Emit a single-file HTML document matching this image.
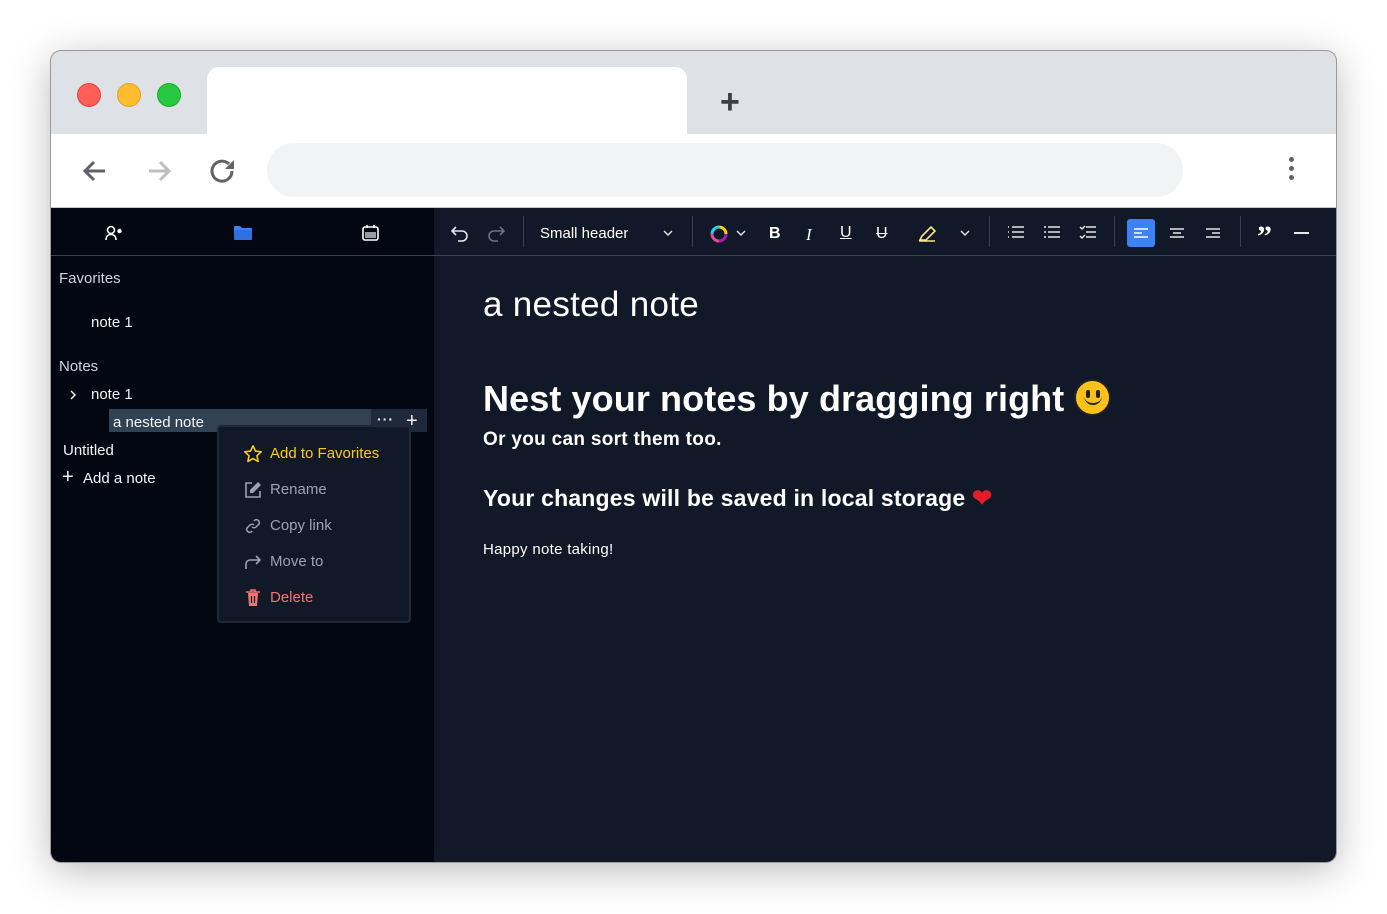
<!DOCTYPE html>
<html><head><meta charset="utf-8"><style>
*{box-sizing:border-box;margin:0;padding:0}
body{width:1387px;height:914px;background:#fff;font-family:"Liberation Sans",sans-serif;position:relative;overflow:hidden}
.win{position:absolute;left:51px;top:51px;width:1285px;height:811px;border-radius:10px;overflow:hidden;box-shadow:0 0 0 1px #9a9a9a,0 8px 40px rgba(0,0,0,.28);background:#dee1e6}
.abs{position:absolute}
.dot{position:absolute;top:32px;width:24px;height:24px;border-radius:50%}
.side{position:absolute;left:0;top:157px;width:383px;height:654px;background:#030712;color:#f3f4f6}
.ed{position:absolute;left:383px;top:157px;width:902px;height:654px;background:#111827;color:#fff}
.t{position:absolute;font-size:15px;white-space:nowrap}
.menu{position:absolute;left:166px;top:217px;width:194px;height:198px;background:#111827;border:2px solid #1f2937;border-radius:4px}
.mi{position:absolute;left:24px;font-size:15px;color:#9ca3af}
.mi svg{position:absolute;left:0;top:0}
.mi span{position:absolute;left:27px;top:1px;white-space:nowrap}
.tb svg{position:absolute}
</style></head><body>
<div class="win">
  <div class="dot" style="left:26px;background:#ff5f57;border:1px solid #e0443e"></div>
  <div class="dot" style="left:66px;background:#febc2e;border:1px solid #dea123"></div>
  <div class="dot" style="left:106px;background:#28c840;border:1px solid #1aab29"></div>
  <div class="abs" style="left:156px;top:16px;width:480px;height:80px;background:#fff;border-radius:12px 12px 0 0"></div>
  <div class="abs" style="left:669px;top:36px;font-size:34px;color:#3c4043;line-height:30px;font-weight:bold">+</div>
  <div class="abs" style="left:0;top:83px;width:1285px;height:74px;background:#fff;border-bottom:1px solid #c8c8c8"></div>
  <svg class="abs" style="left:28px;top:104px" width="32" height="32" viewBox="0 0 32 32"><path d="M26 16H6M15 7l-9 9 9 9" stroke="#5f6368" stroke-width="3" fill="none"/></svg>
  <svg class="abs" style="left:92px;top:104px" width="32" height="32" viewBox="0 0 32 32"><path d="M6 16h20M17 7l9 9-9 9" stroke="#bdbdbd" stroke-width="3" fill="none"/></svg>
  <svg class="abs" style="left:156px;top:104px" width="32" height="32" viewBox="0 0 32 32"><path d="M25 16a10 10 0 1 1-3-7" stroke="#5f6368" stroke-width="3" fill="none"/><path d="M27 5v9h-9z" fill="#5f6368"/></svg>
  <div class="abs" style="left:216px;top:92px;width:916px;height:54px;background:#f1f3f4;border-radius:27px"></div>
  <div class="abs" style="left:1238px;top:106px;width:5px;height:5px;border-radius:50%;background:#5f6368;box-shadow:0 9px 0 #5f6368,0 18px 0 #5f6368"></div>

  <div class="side">
    <div class="abs" style="left:0;top:47px;width:383px;height:1px;background:#374151"></div>
    <svg class="abs" style="left:54px;top:17px" width="20" height="16" viewBox="0 0 20 16"><circle cx="6" cy="5" r="3.5" stroke="#fff" stroke-width="1.6" fill="none"/><path d="M1 15c0-4 2.5-5.5 5-5.5s5 1.5 5 5.5" stroke="#fff" stroke-width="1.6" fill="none"/><circle cx="14.5" cy="6" r="2.2" fill="#fff"/></svg>
    <svg class="abs" style="left:183px;top:17px" width="18" height="15" viewBox="0 0 18 15"><path d="M0 2a1 1 0 0 1 1-1h5l2 2h9a1 1 0 0 1 1 1v10H0z" fill="#3b82f6"/><rect x="0" y="5" width="18" height="10" rx="1" fill="#2f6fe0"/></svg>
    <svg class="abs" style="left:311px;top:16px" width="17" height="17" viewBox="0 0 17 17"><rect x="1" y="3" width="15" height="13" rx="2" stroke="#fff" stroke-width="1.6" fill="none"/><path d="M5 1v3M12 1v3" stroke="#fff" stroke-width="1.6"/><rect x="3" y="8" width="11" height="6" fill="#fff" opacity=".6"/></svg>
    <div class="t" style="left:8px;top:62px;color:#d1d5db">Favorites</div>
    <div class="t" style="left:40px;top:106px">note 1</div>
    <div class="t" style="left:8px;top:150px;color:#d1d5db">Notes</div>
    <svg class="abs" style="left:17px;top:181px" width="10" height="12" viewBox="0 0 10 12"><path d="M3 2l4 4-4 4" stroke="#fff" stroke-width="1.4" fill="none"/></svg>
    <div class="t" style="left:40px;top:178px">note 1</div>
    <div class="abs" style="left:58px;top:201px;width:262px;height:23px;background:#334155"></div>
    <div class="abs" style="left:320px;top:201px;width:56px;height:23px;background:#1e293b"></div>
    <div class="t" style="left:62px;top:206px">a nested note</div>
    <div class="t" style="left:326px;top:203px;font-size:14px;font-weight:bold;letter-spacing:1px">···</div>
    <div class="t" style="left:355px;top:203px;font-size:20px;line-height:20px">+</div>
    <div class="t" style="left:12px;top:234px">Untitled</div>
    <div class="t" style="left:11px;top:259px;font-size:20px;line-height:20px">+</div>
    <div class="t" style="left:32px;top:262px">Add a note</div>
    <div class="menu">
      <div class="mi" style="top:17px;color:#facc15"><svg width="20" height="20" viewBox="0 0 20 20"><path d="M10 1.8l2.5 5.3 5.7.7-4.2 3.9 1.1 5.7L10 14.6l-5.1 2.8 1.1-5.7L1.8 7.8l5.7-.7z" stroke="#facc15" stroke-width="1.6" fill="none" stroke-linejoin="round"/></svg><span>Add to Favorites</span></div>
      <div class="mi" style="top:53px"><svg width="20" height="20" viewBox="0 0 20 20"><path d="M9 3H3v14h14v-6" stroke="#9ca3af" stroke-width="1.6" fill="none"/><path d="M15 2l3 3-8 8H7v-3z" fill="#9ca3af"/></svg><span>Rename</span></div>
      <div class="mi" style="top:89px"><svg width="20" height="20" viewBox="0 0 20 20"><path d="M9 11a3 3 0 0 0 4 0l3-3a3 3 0 0 0-4-4l-1 1M11 9a3 3 0 0 0-4 0l-3 3a3 3 0 0 0 4 4l1-1" stroke="#9ca3af" stroke-width="1.5" fill="none"/></svg><span>Copy link</span></div>
      <div class="mi" style="top:125px"><svg width="20" height="20" viewBox="0 0 20 20"><path d="M3 17v-5a4 4 0 0 1 4-4h10M13 4l4 4-4 4" stroke="#9ca3af" stroke-width="1.6" fill="none"/></svg><span>Move to</span></div>
      <div class="mi" style="top:161px;color:#f87171"><svg width="20" height="20" viewBox="0 0 20 20"><path d="M3 4h14M8 4V2h4v2" stroke="#f87171" stroke-width="1.6" fill="none"/><path d="M5 5h10l-1 13H6z" fill="#f87171"/><path d="M8.5 8v7M11.5 8v7" stroke="#111827" stroke-width="1.2"/></svg><span>Delete</span></div>
    </div>
  </div>

  <div class="ed">
    <div class="abs" style="left:0;top:47px;width:902px;height:1px;background:#374151"></div>
    <div class="tb">
      <svg style="left:16px;top:16px" width="20" height="18" viewBox="0 0 20 18"><path d="M6 3L2 7l4 4M2 7h10a5 5 0 0 1 0 10H8" stroke="#e5e7eb" stroke-width="1.6" fill="none"/></svg>
      <svg style="left:52px;top:16px" width="20" height="18" viewBox="0 0 20 18"><path d="M14 3l4 4-4 4M18 7H8a5 5 0 0 0 0 10h4" stroke="#6b7280" stroke-width="1.6" fill="none"/></svg>
      <div class="abs" style="left:89px;top:8px;width:1px;height:31px;background:#374151"></div>
      <div class="t" style="left:106px;top:17px;color:#fff">Small header</div>
      <svg style="left:228px;top:21px" width="12" height="8" viewBox="0 0 12 8"><path d="M2 2l4 4 4-4" stroke="#e5e7eb" stroke-width="1.4" fill="none"/></svg>
      <div class="abs" style="left:258px;top:8px;width:1px;height:31px;background:#374151"></div>
      <svg style="left:275px;top:16px" width="20" height="20" viewBox="0 0 20 20"><circle cx="10" cy="10" r="7" stroke="#a21caf" stroke-width="3" fill="none" stroke-dasharray="11 33"/><circle cx="10" cy="10" r="7" stroke="#ec4899" stroke-width="3" fill="none" stroke-dasharray="0 11 11 22"/><circle cx="10" cy="10" r="7" stroke="#22d3ee" stroke-width="3" fill="none" stroke-dasharray="0 22 11 11"/><circle cx="10" cy="10" r="7" stroke="#facc15" stroke-width="3" fill="none" stroke-dasharray="0 33 11 0"/></svg>
      <svg style="left:301px;top:21px" width="12" height="8" viewBox="0 0 12 8"><path d="M2 2l4 4 4-4" stroke="#e5e7eb" stroke-width="1.4" fill="none"/></svg>
      <div class="t" style="left:335px;top:17px;font-weight:bold;font-size:16px">B</div>
      <div class="t" style="left:372px;top:17px;font-style:italic;font-family:'Liberation Serif',serif;font-size:17px">I</div>
      <div class="t" style="left:406px;top:16px;font-size:16px;text-decoration:underline">U</div>
      <div class="t" style="left:442px;top:17px;font-size:16px;text-decoration:line-through">U</div>
      <svg style="left:483px;top:16px" width="20" height="18" viewBox="0 0 20 18"><path d="M3 16h6l9-9-4-4-9 9z M2 17h16" stroke="#fde68a" stroke-width="1.6" fill="none"/></svg>
      <svg style="left:525px;top:21px" width="12" height="8" viewBox="0 0 12 8"><path d="M2 2l4 4 4-4" stroke="#e5e7eb" stroke-width="1.4" fill="none"/></svg>
      <div class="abs" style="left:555px;top:8px;width:1px;height:31px;background:#374151"></div>
      <svg style="left:573px;top:17px" width="18" height="14" viewBox="0 0 18 14"><path d="M5 2h12M5 7h12M5 12h12M1 2h1M1 7h1M1 12h1" stroke="#e5e7eb" stroke-width="1.6"/></svg>
      <svg style="left:609px;top:17px" width="18" height="14" viewBox="0 0 18 14"><path d="M5 2h12M5 7h12M5 12h12M1 2h2M1 7h2M1 12h2" stroke="#e5e7eb" stroke-width="1.6"/></svg>
      <svg style="left:645px;top:16px" width="18" height="16" viewBox="0 0 18 16"><path d="M7 3h10M7 8h10M7 13h10M1 3l2 2 3-3M1 12l2 2 3-3" stroke="#e5e7eb" stroke-width="1.5" fill="none"/></svg>
      <div class="abs" style="left:680px;top:8px;width:1px;height:31px;background:#374151"></div>
      <div class="abs" style="left:693px;top:11px;width:28px;height:28px;background:#3b82f6;border-radius:3px"></div>
      <svg style="left:699px;top:18px" width="16" height="14" viewBox="0 0 16 14"><path d="M1 3h14M1 7h8M1 11h14" stroke="#fff" stroke-width="1.6"/></svg>
      <svg style="left:735px;top:18px" width="16" height="14" viewBox="0 0 16 14"><path d="M1 3h14M4 7h8M1 11h14" stroke="#e5e7eb" stroke-width="1.6"/></svg>
      <svg style="left:771px;top:18px" width="16" height="14" viewBox="0 0 16 14"><path d="M1 3h14M7 7h8M1 11h14" stroke="#e5e7eb" stroke-width="1.6"/></svg>
      <div class="abs" style="left:806px;top:8px;width:1px;height:31px;background:#374151"></div>
      <div class="t" style="left:823px;top:15px;font-size:30px;font-weight:bold;font-family:'Liberation Serif',serif;line-height:28px">”</div>
      <div class="abs" style="left:860px;top:24px;width:15px;height:2px;background:#e5e7eb"></div>
    </div>
    <div class="t" style="left:49px;top:77px;font-size:35px;letter-spacing:0.3px">a nested note</div>
    <div class="t" style="left:49px;top:170px;font-size:36px;font-weight:bold;letter-spacing:0.1px">Nest your notes by dragging right <span style="display:inline-block;width:37px;height:37px;border-radius:50%;background:#fcc21b;border:2px solid #222;vertical-align:-5px;position:relative"><span style="position:absolute;left:10px;top:9px;width:4px;height:8px;background:#222;border-radius:2px"></span><span style="position:absolute;left:20px;top:9px;width:4px;height:8px;background:#222;border-radius:2px"></span><span style="position:absolute;left:8px;top:15px;width:18px;height:9px;border-bottom:2.5px solid #222;border-radius:0 0 10px 10px"></span></span></div>
    <div class="t" style="left:49px;top:221px;font-size:19px;font-weight:bold;letter-spacing:0.3px">Or you can sort them too.</div>
    <div class="t" style="left:49px;top:276px;font-size:23px;font-weight:bold;letter-spacing:0.2px">Your changes will be saved in local storage <span style="color:#e11d2a;font-size:24px">❤</span></div>
    <div class="t" style="left:49px;top:333px;font-size:15px;letter-spacing:0.3px">Happy note taking!</div>
  </div>
</div>
</body></html>
